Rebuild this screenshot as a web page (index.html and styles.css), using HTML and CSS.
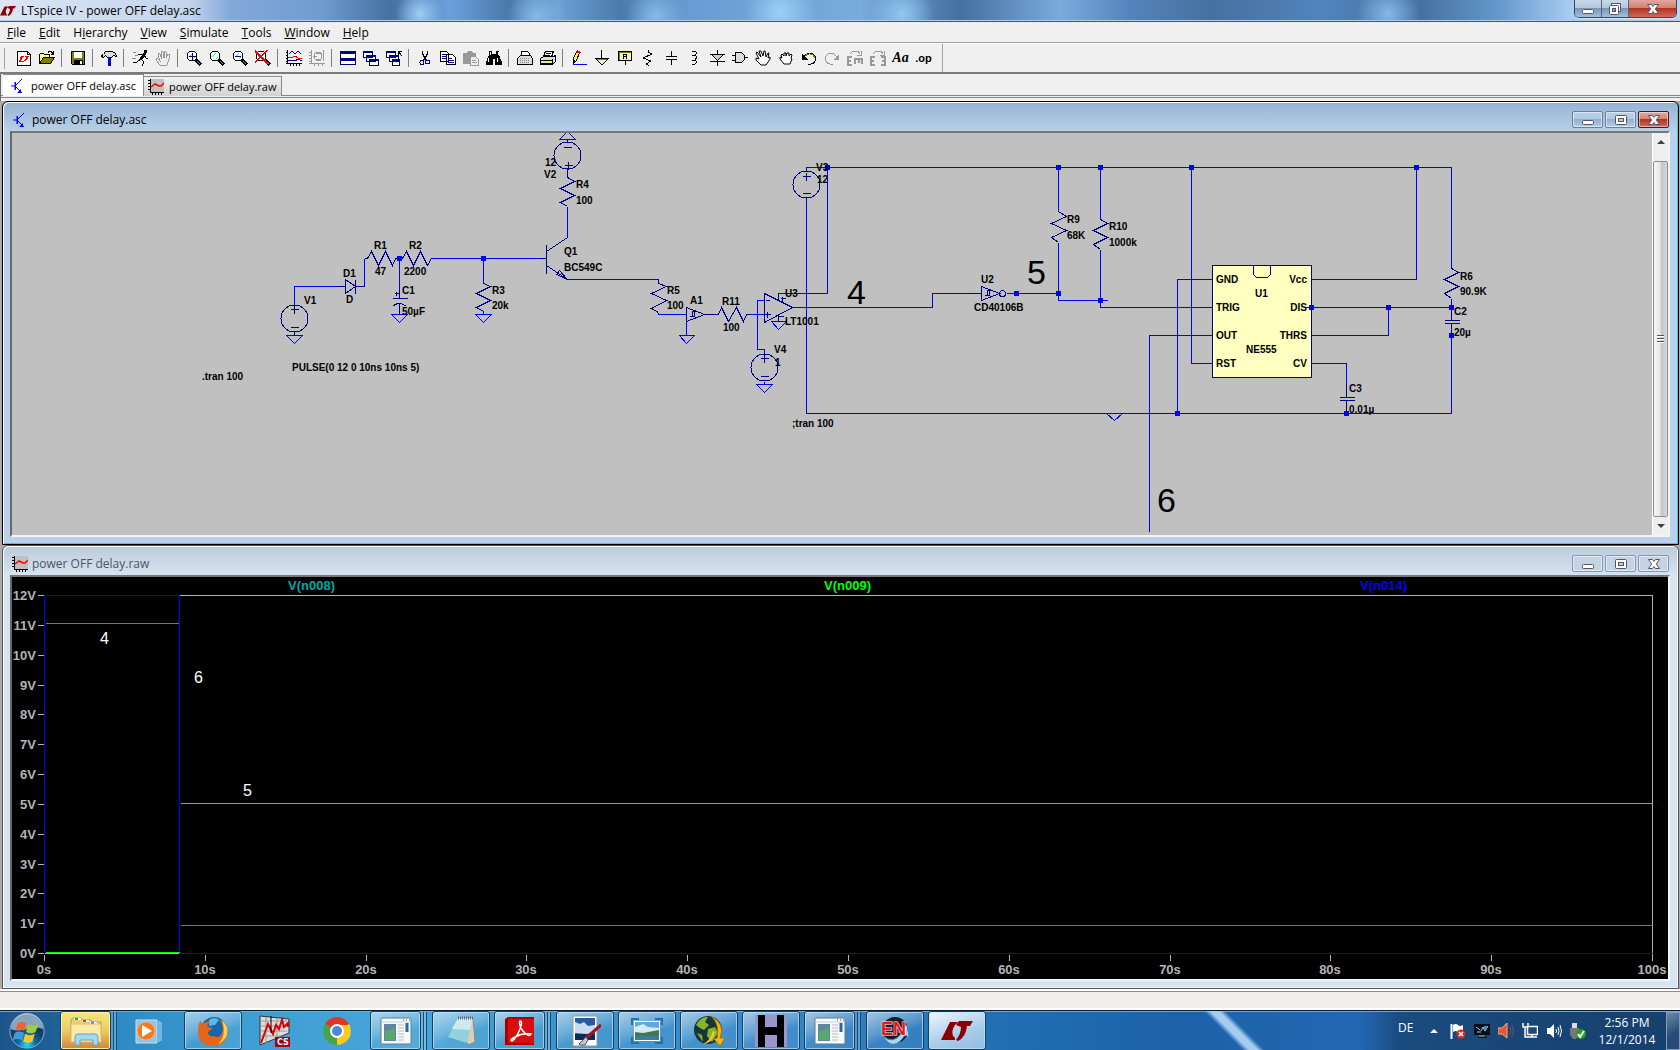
FILE: index.html
```html
<!DOCTYPE html>
<html lang="en">
<head>
    <meta charset="UTF-8">
    <meta name="viewport" content="width=device-width, initial-scale=1.0">
    <title>LTspice IV - power OFF delay.asc</title>
    <link rel="stylesheet" href="styles.css">
</head>
<body>
    <!-- shared shapes -->
    <svg class="defs" width="0" height="0" aria-hidden="true">
        <symbol id="logo" viewBox="0 0 32 20"><path fill="#8b0000" d="M9 1h8l-3 3q-4 6-2 11l2 2v2H0zM18 0h14l-3 5h-3q-1 11-9 15l-2-1q5-6 5-13l-5-2z"/></symbol>
        <symbol id="transistor" viewBox="0 0 16 16"><path d="M1 8h5M5 4v8M6 7l5-5M12 1l-1 1M6 9l6 6" stroke="#00f" fill="none"/><path d="M5 4h1v8H5zM11 11v4H7z" fill="#00f"/></symbol>
        <symbol id="wave" viewBox="0 0 16 16"><path fill="#c0c0c0" d="M2 0h14v14H2z"/><path d="M2.500 0v13.500H16M0 1.500h2M0 4.500h2M0 7.500h2M0 10.500h2M4.500 14v2M7.500 14v2M10.500 14v2M13.500 14v2" stroke="#000" fill="none"/><path d="M3 8l4-3 4 2h2l3-3" stroke="red" stroke-width="1.500" fill="none"/></symbol>
        <symbol id="lens" viewBox="0 0 16 16"><circle cx="6" cy="6" r="5" fill="#fff" stroke="#000"/><path d="M3 7l4-4M7 9l2-2" stroke="#0ff"/><path d="M10 10l5 5" stroke="#000" stroke-width="3"/><path d="M11 11l3 3" stroke="#888"/></symbol>
        <symbol id="min" viewBox="0 0 14 12"><rect x="1.500" y="6.500" width="11" height="4" rx="1" fill="#fff" stroke="#535666"/></symbol>
        <symbol id="max" viewBox="0 0 14 12"><rect x="1.500" y="1.500" width="11" height="9" rx="1" fill="#fff" stroke="#535666"/><rect x="4.500" y="4.500" width="5" height="3" fill="#bcd" stroke="#535666"/></symbol>
        <symbol id="restore" viewBox="0 0 14 12"><rect x="3.500" y=".5" width="9" height="8" fill="#fff" stroke="#535666"/><rect x="1.500" y="2.500" width="9" height="9" rx="1" fill="#fff" stroke="#535666"/><rect x="4.500" y="5.500" width="3" height="3" fill="#89b" stroke="#535666"/></symbol>
        <symbol id="close" viewBox="0 0 14 12"><path d="M1.500 1.500h4L7 3.500l1.500-2h4L9.300 6l3.200 4.500h-4L7 8.500l-1.500 2h-4L4.700 6z" fill="#fff" stroke="#535666"/></symbol>
        <symbol id="program" viewBox="0 0 32 28"><rect x="1" y="1" width="30" height="26" rx="1" fill="#f7f8fa" stroke="#657c90"/><path d="M2 5h28" stroke="#c9d2da"/><path d="M23 3h1M26 3h1M29 3h1" stroke="#345"/><rect x="4" y="7" width="12" height="17" fill="#5e86a0"/><path d="M5 15c4-3 7-2 10-5v13H5z" fill="#58a86c"/><path d="M18 8h6M18 11h6M18 14h6M18 17h6M18 20h6M18 23h6" stroke="#b7bcc2"/><path d="M27 6v9" stroke="#256aa0" stroke-width="3"/></symbol>
    </svg>

    <header class="titlebar">
        <svg class="app-logo"><use href="#logo"/></svg>
        <h1>LTspice IV - power OFF delay.asc</h1>
        <div class="caption main-caption">
            <button aria-label="Minimize"><svg><use href="#min"/></svg></button>
            <button aria-label="Restore"><svg><use href="#restore"/></svg></button>
            <button class="close" aria-label="Close"><svg><use href="#close"/></svg></button>
        </div>
    </header>

    <nav class="menu">
        <button><u>F</u>ile</button>
        <button><u>E</u>dit</button>
        <button>H<u>i</u>erarchy</button>
        <button><u>V</u>iew</button>
        <button><u>S</u>imulate</button>
        <button><u>T</u>ools</button>
        <button><u>W</u>indow</button>
        <button><u>H</u>elp</button>
    </nav>

    <div class="toolbar">
        <div class="tools">
            <button aria-label="New schematic"><svg viewBox="0 0 16 16"><path d="M1.500 1.500h10l3 3v11h-13z" fill="#fff" stroke="#000"/><path d="M11.500 1.500v3h3" fill="none" stroke="#000"/><path fill="red" d="M5 6h3l-3 5h2l-1 1H3zM9 6h4l-2 4-4 2 3-4z"/></svg></button>
            <button aria-label="Open"><svg viewBox="0 0 16 16"><path d="M.5 13.500v-9l1-1h3l1 1h5v3" fill="#ffff80" stroke="#000"/><path d="M.5 13.500l4-6h11l-4 6z" fill="#808000" stroke="#000"/><path d="M9 2.500l1-1h2l2 2M14.500 1v3h-3" fill="none" stroke="#000"/></svg></button>
            <span class="sep"></span>
            <button aria-label="Save"><svg viewBox="0 0 16 16"><path d="M1.500 1.500h13v13h-12l-1-1z" fill="#808000" stroke="#000"/><path fill="#fff" d="M4 2h8v6H4z"/><path fill="#000" d="M4 10h9v5H4z"/><path fill="#fff" d="M10 11h2v3h-2z"/></svg></button>
            <span class="sep"></span>
            <button aria-label="Control panel"><svg viewBox="0 0 16 16"><path d="M.5 5.500l2-1 2-3h7l3 2 1 3-3-1-2 2h-4l-2-2-2 2h-1z" fill="#ddd" stroke="#000"/><path d="M7 7h3v9H7z" fill="#00f"/><path d="M9.500 7v9" stroke="#000080"/></svg></button>
            <span class="sep"></span>
            <button aria-label="Run"><svg viewBox="0 0 16 16"><path d="M12 0h3v3h-3z"/><path d="M13 3L9 9" fill="none" stroke="#000" stroke-width="3"/><path d="M9 9l3 3-2 4M9 9l-4 3H1M11 4L7 4 5 6M12 5l2 3h2" fill="none" stroke="#000"/><path d="M1 2h3M3 5h3M0 8h4" stroke="#888"/></svg></button>
            <button aria-label="Halt" disabled><svg viewBox="0 0 16 16"><path d="M5 15L1 10V8l2 1 2 2-2-7 1-1 1 1 2 5-1-7 1-1 1 1 1 6V2l1-1 1 1v6l2-4h1v5l-2 6z" fill="#eee" stroke="#999"/></svg></button>
            <span class="sep"></span>
            <button aria-label="Zoom in"><svg viewBox="0 0 16 16"><use href="#lens"/><path d="M3 6.500h7M6.500 3v7" stroke="#000080"/></svg></button>
            <button aria-label="Pan"><svg><use href="#lens"/></svg></button>
            <button aria-label="Zoom back"><svg viewBox="0 0 16 16"><use href="#lens"/><path d="M3 6.500h6" stroke="#000080"/></svg></button>
            <button aria-label="Zoom full extents"><svg viewBox="0 0 16 16"><use href="#lens"/><path d="M0 1l13 13M12 0L0 13" stroke="red" stroke-width="1.500"/></svg></button>
            <span class="sep"></span>
            <button aria-label="Autorange"><svg viewBox="0 0 16 16"><path d="M1.500 0v14M0 13.500h16M0 2h2M0 5h2M0 8h2M0 11h2M4 14v2M7 14v2M10 14v2M13 14v2" stroke="#000"/><path d="M3 4l3-3 3 3 3-3 3 3M2 11l3-1 4 1 3-2 4 2" stroke="#000080" fill="none"/><path d="M2 7h5l2-1 3 2h4" stroke="red" fill="none"/></svg></button>
            <button aria-label="Plot settings" disabled><svg viewBox="0 0 16 16"><path d="M2.500 0v14M0 13.500h16M0 2h2M0 5h2M0 8h2M0 11h2M5 14v2M9 14v2M13 14v2M14.500 0v11M4 6h4M7 3h5M7 10h5" stroke="#999"/><circle cx="9" cy="6" r="4" fill="none" stroke="#999"/></svg></button>
            <span class="sep"></span>
            <button aria-label="Tile"><svg viewBox="0 0 16 16"><path d="M.5 1.500h15v13H.5zM0 8.500h16" fill="#fff" stroke="#000080"/><path d="M0 2.500h16M0 9.500h16" stroke="#000080" stroke-width="3"/></svg></button>
            <button aria-label="Cascade"><svg viewBox="0 0 16 16"><g fill="#fff" stroke="#000080"><path d="M.5 1.500h9v6h-9zM0 2.500h10M3.500 5.500h9v6h-9zM3 6.500h10M6.500 9.500h9v6h-9zM6 10.500h10"/></g></svg></button>
            <button aria-label="Close all"><svg viewBox="0 0 16 16"><g fill="#fff" stroke="#000080"><path d="M.5 1.500h9v6h-9zM0 2.500h10M3.500 5.500h9v6h-9zM3 6.500h10M6.500 9.500h7v6h-7zM6 10.500h8"/></g><path d="M12 1h4M12.500 1v4M12 1l4 5" stroke="#000"/></svg></button>
            <span class="sep"></span>
            <button aria-label="Cut"><svg viewBox="0 0 16 16"><path d="M5.500 1v3l4 6M10.500 1v3l-4 6" fill="none" stroke="#000" stroke-width="1.500"/><circle cx="5" cy="12.500" r="2" fill="none" stroke="#000080"/><circle cx="10.500" cy="12" r="2" fill="none" stroke="#000080"/></svg></button>
            <button aria-label="Copy"><svg viewBox="0 0 16 16"><path d="M.5 1.500h6l2 2v8h-8zM6.500 4.500h6l3 3v7h-9z" fill="#fff" stroke="#000"/><path d="M2 4h4M2 6h4M2 8h4M8 8h4M8 10h6M8 12h6" stroke="#000080"/></svg></button>
            <button aria-label="Paste" disabled><svg viewBox="0 0 16 16"><path d="M0 3h4l1-2h4l1 2h3v11H0z" fill="#999"/><path d="M7.500 6.500h5l3 3v6h-8z" fill="#eee" stroke="#999"/><path d="M9 10h4M9 12h5" stroke="#999"/></svg></button>
            <button aria-label="Find"><svg viewBox="0 0 16 16"><path d="M3 1h3v3h4V1h3v4l3 7v3H9V9H7v6H0v-3l3-7z"/><path d="M4 2v3M12 2v3M3 8l-1 4M11 8v4" stroke="#fff"/></svg></button>
            <span class="sep"></span>
            <button aria-label="Print setup"><svg viewBox="0 0 16 16"><path d="M4.500 6V1.500h6l2 2V6" fill="#fff" stroke="#000"/><path d="M.5 8.500l3-3h10l2 3v6H.5z" fill="#ddd" stroke="#000"/><path d="M3 8h10M3 10h10M3 12h10" stroke="#888" stroke-dasharray="1 1"/></svg></button>
            <button aria-label="Print"><svg viewBox="0 0 16 16"><path d="M3.500 7l2-6h8l-2 6" fill="#fff" stroke="#000"/><path d="M.5 8.500l3-2h10l2-1v6l-3 3H.5z" fill="#ddd" stroke="#000"/><path d="M6 3h5M5 5h5M1 10h11M1 13h11M12.500 9v5" stroke="#000"/><path d="M7 12h4" stroke="#ff0" stroke-width="2"/></svg></button>
            <span class="sep"></span>
            <button aria-label="Draw wire"><svg viewBox="0 0 16 16"><path d="M6 1l3 1-4 9-3 3V9z" fill="#ff0" stroke="#000"/><path d="M6 0l4 2-1 2-4-2z" fill="red"/><path d="M2 10l3 1-3 4z"/><path d="M2 14.500h14" stroke="#00f"/></svg></button>
            <button aria-label="Ground"><svg viewBox="0 0 16 16"><path d="M7.500 0v8M1.500 8.500h13l-6 6h-1z" fill="#f0f0c0" stroke="#000"/><path d="M3 9.500h10" stroke="#808000"/></svg></button>
            <button aria-label="Label net"><svg viewBox="0 0 16 16"><path d="M1.500 1.500h13v9h-13z" fill="#f0f0c0" stroke="#000"/><path d="M3 2.500h11M2.500 2v8" stroke="#808000"/><path d="M6.500 9V4.500h3V9M7 6.500h3M8 11v4" fill="none" stroke="#000"/></svg></button>
            <button aria-label="Resistor"><svg viewBox="0 0 16 16"><path d="M8 0v2l4 2-9 4 8 3-5 3 2 1v1" fill="none" stroke="#000"/></svg></button>
            <button aria-label="Capacitor"><svg viewBox="0 0 16 16"><path d="M8.500 1v6M3 6.500h11M3 9.500h11M8.500 10v5" stroke="#000"/></svg></button>
            <button aria-label="Inductor"><svg viewBox="0 0 16 16"><path d="M6 1h3l2 2-2 2H6M9 5l2 2-2 3H6M9 10l2 2-2 2H6" fill="none" stroke="#000"/></svg></button>
            <button aria-label="Diode"><svg viewBox="0 0 16 16"><path d="M8.500 0v4M1 4.500h15M2.500 4.500l6 6 6-6M1 11.500h15M8.500 11v5" fill="#ccc" stroke="#000"/></svg></button>
            <button aria-label="Component"><svg viewBox="0 0 16 16"><path d="M3.500 2.500h6l3 3v4l-3 3h-6zM0 5.500h3M0 10.500h3M12 7.500h4" fill="#ddd" stroke="#000"/></svg></button>
            <button aria-label="Move"><svg class="hand" viewBox="0 0 16 16"><path d="M6 15L1 10V8l3 1-3-6 1-1 4 5-2-6h2l2 5 1-5h1l1 6 2-4h1l-1 5 2-1v2l-4 6z" fill="#fff" stroke="#000"/></svg></button>
            <button aria-label="Drag"><svg class="hand" viewBox="0 0 16 16"><path d="M6 14L2 9V7l2 1-1-3 1-1 2 2V3h2v3l1-3h2v3l2-2 1 1-1 3 1 1-2 5z" fill="#fff" stroke="#000"/></svg></button>
            <button aria-label="Undo"><svg viewBox="0 0 16 16"><path d="M3 7c3-5 10-5 12 1 0 4-3 6-5 6H7" fill="none" stroke="#000"/><path d="M4 6c3-3 8-3 10 2" fill="none" stroke="#808000"/><path d="M1.500 4.500v5h5z" stroke="#000"/></svg></button>
            <button aria-label="Redo" disabled><svg viewBox="0 0 16 16"><path d="M13 7C10 2 3 2 1 8c0 4 3 6 5 6h3" fill="none" stroke="#999"/><path d="M14.500 4.500v5h-5z" fill="#999"/></svg></button>
            <button aria-label="Rotate" disabled><svg viewBox="0 0 16 16"><path d="M1 6v9M0 7h5M0 11h4M0 15h5M7 9h9M8 9v5M12 9v4M15 9v5" stroke="#999" stroke-width="2"/><path d="M3 4l3-3h5l2 3M14 1v4h-4" fill="none" stroke="#999"/></svg></button>
            <button aria-label="Mirror" disabled><svg viewBox="0 0 16 16"><path d="M1 6v9M0 7h5M0 11h4M0 15h5M15 6v9M11 7h5M12 11h4M11 15h5" stroke="#999" stroke-width="2"/><path d="M3 4l3-3h5l2 3M14 1v4h-4" fill="none" stroke="#999"/></svg></button>
            <button class="tool-text">Aa</button>
            <button class="tool-op">.op</button>
        </div>
    </div>

    <div class="tabs">
        <button class="tab active"><svg><use href="#transistor"/></svg>power OFF delay.asc</button>
        <button class="tab"><svg><use href="#wave"/></svg>power OFF delay.raw</button>
    </div>

    <main class="mdi">
        <section class="window">
            <div class="window-title">
                <svg><use href="#transistor"/></svg>
                <h2>power OFF delay.asc</h2>
                <div class="caption">
                    <button aria-label="Minimize"><svg><use href="#min"/></svg></button>
                    <button aria-label="Maximize"><svg><use href="#max"/></svg></button>
                    <button class="close" aria-label="Close"><svg><use href="#close"/></svg></button>
                </div>
            </div>
            <div class="client">
                <svg class="schematic" viewBox="12 133 1640 402" preserveAspectRatio="xMinYMin meet">
                    <g transform="translate(.5 .5)">
                        <path class="wire" d="M294 305v-19h43M364 286v-28M399 258v32M431 258h109M483 258v25M567 206v31M567 279h91v4M658 312v2h28M686 321v14M750 314h14M764 300h-7v49h7v4M778 299v-6h49v-126M806 170v-3h645v101M806 197v216h645v-78M792 307h140v-14h36M1006 293h52v7h49M1058 167v44M1058 242v51M1100 167v52M1100 249v58h112M1191 167v196h21M1212 279h-35v134M1212 335h-63v196M1311 279h105v-112M1305 307h146M1388 307v28h-77M1311 363h35v34M1451 298v9"/>
                        <!-- grounds -->
                        <path class="wire" d="M559 139l8-8 8 8zM286 335h16l-8 8zM391 314h16l-8 8zM475 314h16l-8 8zM679 335h15l-8 8zM771 321h15l-8 8zM756 384h16l-8 8zM1106 413l8 7 8-7"/>
                        <g class="part">
                            <!-- voltage sources -->
                            <circle cx="567" cy="155" r="13.500"/><path d="M563 147h8M564 165h8M568 161v8M567 139v3M567 169v8"/>
                            <circle cx="294" cy="318" r="13.500"/><path d="M290 309h8M294 305v8M290 327h8M294 332v3"/>
                            <circle cx="806" cy="184" r="13.500"/><path d="M802 176h8M806 172v8M802 193h8"/>
                            <circle cx="764" cy="367" r="13.500"/><path d="M760 358h8M764 354v8M760 376h8M764 381v3"/>
                            <!-- resistors -->
                            <path d="M364 258h3l4-7 7 14 7-14 7 14 3-7h7l4-7 7 14 7-14 7 14 4-7"/>
                            <path d="M567 177l7 4-14 7 14 7-14 7 7 4M483 283l7 3-14 7 14 7-14 7 7 4v3M658 283l8 3-15 7 15 7-15 8 7 4M704 314h14l3-7 7 14 8-14 7 14 3-7h4"/>
                            <path d="M1058 211l8 5-15 7 15 7-15 7 7 5M1100 219l7 4-14 7 14 7-14 7 7 5M1451 268l7 4-14 7 14 7-14 7 7 5"/>
                            <!-- diode, capacitors, transistor -->
                            <path d="M337 286h8M345 279v14l10-7zM355 279v14M355 286h9M399 290v8M392 298h15M392 306q3-3 7-3t7 3M399 303v11M394 293h4M396 291v4"/>
                            <path d="M1451 307v13M1444 320h15M1444 323h15M1451 323v12M1346 385v12M1339 397h15M1339 400h15M1346 400v13"/>
                            <path d="M540 258h6M546 244v29M546 251l21-14M546 265l21 14M559 270l8 9-11-5z"/>
                            <!-- gates -->
                            <path d="M686 307v14l18-7zM689 316h3v-5h2M691 316h3v-5M764 293v29l28-15zM765 300h4M764 314h6M767 311v6M778 293v6M780 298h5M782 296v5M778 314v7M778 316h5M968 293h13M981 286v14l18-7zM984 295h3v-5h2M986 295h3v-5"/>
                            <circle cx="1002" cy="293" r="3"/>
                        </g>
                        <rect class="chip" x="1212" y="265" width="99" height="112"/>
                        <path class="part" d="M1253 265v9l3 3h11l3-3v-9"/>
                        <path class="wire" d="M1305 307h7"/>
                        <path class="node" d="M397 256h5v5h-5zM481 256h5v5h-5zM825 165h5v5h-5zM1056 165h5v5h-5zM1098 165h5v5h-5zM1189 165h5v5h-5zM1414 165h5v5h-5zM1014 291h5v5h-5zM1056 291h5v5h-5zM1098 298h5v5h-5zM1309 305h5v5h-5zM1386 305h5v5h-5zM1449 305h5v5h-5zM1449 333h5v5h-5zM1175 411h5v5h-5zM1344 411h5v5h-5z"/>
                    </g>
                    <g class="labels">
                        <text x="545" y="166">12</text><text x="544" y="178">V2</text>
                        <text x="576" y="188">R4</text><text x="576" y="204">100</text>
                        <text x="374" y="249">R1</text><text x="375" y="275">47</text>
                        <text x="409" y="249">R2</text><text x="404" y="275">2200</text>
                        <text x="343" y="277">D1</text><text x="346" y="303">D</text>
                        <text x="304" y="304">V1</text>
                        <text x="402" y="294">C1</text><text x="402" y="315">50µF</text>
                        <text x="492" y="294">R3</text><text x="492" y="309">20k</text>
                        <text x="564" y="255">Q1</text><text x="564" y="271">BC549C</text>
                        <text x="292" y="371">PULSE(0 12 0 10ns 10ns 5)</text>
                        <text x="202" y="380">.tran 100</text>
                        <text x="667" y="294">R5</text><text x="667" y="309">100</text>
                        <text x="690" y="304">A1</text>
                        <text x="722" y="305">R11</text><text x="723" y="331">100</text>
                        <text x="785" y="297">U3</text><text x="785" y="325">LT1001</text>
                        <text x="774" y="353">V4</text><text x="775" y="366">1</text>
                        <text x="816" y="171">V3</text><text x="817" y="183">12</text>
                        <text x="792" y="427">;tran 100</text>
                        <text x="981" y="283">U2</text><text x="974" y="311">CD40106B</text>
                        <text x="1067" y="223">R9</text><text x="1067" y="239">68K</text>
                        <text x="1109" y="230">R10</text><text x="1109" y="246">1000k</text>
                        <text x="1460" y="280">R6</text><text x="1460" y="295">90.9K</text>
                        <text x="1454" y="315">C2</text><text x="1454" y="336">20µ</text>
                        <text x="1349" y="392">C3</text><text x="1349" y="413">0.01µ</text>
                        <text x="1216" y="283">GND</text><text x="1216" y="311">TRIG</text>
                        <text x="1216" y="339">OUT</text><text x="1216" y="367">RST</text>
                        <text class="end" x="1307" y="283">Vcc</text><text class="end" x="1307" y="311">DIS</text>
                        <text class="end" x="1307" y="339">THRS</text><text class="end" x="1307" y="367">CV</text>
                        <text x="1255" y="297">U1</text><text x="1246" y="353">NE555</text>
                    </g>
                    <g class="marks">
                        <text x="847" y="304">4</text><text x="1027" y="284">5</text><text x="1157" y="512">6</text>
                    </g>
                </svg>
                <div class="scrollbar">
                    <button aria-label="Scroll up"><svg viewBox="0 0 8 4"><path d="M0 4l4-4 4 4z"/></svg></button>
                    <div class="thumb"><i></i><i></i><i></i></div>
                    <button aria-label="Scroll down"><svg viewBox="0 0 8 4"><path d="M0 0l4 4 4-4z"/></svg></button>
                </div>
            </div>
        </section>

        <section class="window inactive">
            <div class="window-title">
                <svg><use href="#wave"/></svg>
                <h2>power OFF delay.raw</h2>
                <div class="caption">
                    <button aria-label="Minimize"><svg><use href="#min"/></svg></button>
                    <button aria-label="Maximize"><svg><use href="#max"/></svg></button>
                    <button aria-label="Close"><svg><use href="#close"/></svg></button>
                </div>
            </div>
            <div class="client">
                <svg class="plot" viewBox="12 577 1656 402" preserveAspectRatio="xMinYMin meet">
                    <g transform="translate(.5 .5)">
                        <path class="axis" d="M44 595h1608v365M44 953h1608M37 595h7M37 625h7M37 655h7M37 685h7M37 714h7M37 744h7M37 774h7M37 804h7M37 834h7M37 864h7M37 893h7M37 923h7M37 953h7M44 954v6M205 954v6M366 954v6M526 954v6M687 954v6M848 954v6M1009 954v6M1170 954v6M1330 954v6M1491 954v6"/>
                        <path class="n008" d="M45 623h134M180 925h1472"/>
                        <path class="n014" d="M44 953v-358h135v358h1473"/>
                        <path class="n009" d="M45 952h134M180 803h1472"/>
                    </g>
                    <g class="legend">
                        <text class="t008" x="288" y="590">V(n008)</text>
                        <text class="t009" x="824" y="590">V(n009)</text>
                        <text class="t014" x="1360" y="590">V(n014)</text>
                    </g>
                    <g class="ylabels">
                        <text x="36" y="600">12V</text><text x="36" y="630">11V</text><text x="36" y="660">10V</text>
                        <text x="36" y="690">9V</text><text x="36" y="719">8V</text><text x="36" y="749">7V</text>
                        <text x="36" y="779">6V</text><text x="36" y="809">5V</text><text x="36" y="839">4V</text>
                        <text x="36" y="869">3V</text><text x="36" y="898">2V</text><text x="36" y="928">1V</text>
                        <text x="36" y="958">0V</text>
                    </g>
                    <g class="xlabels">
                        <text x="44" y="974">0s</text><text x="205" y="974">10s</text><text x="366" y="974">20s</text>
                        <text x="526" y="974">30s</text><text x="687" y="974">40s</text><text x="848" y="974">50s</text>
                        <text x="1009" y="974">60s</text><text x="1170" y="974">70s</text><text x="1330" y="974">80s</text>
                        <text x="1491" y="974">90s</text><text x="1652" y="974">100s</text>
                    </g>
                    <g class="notes">
                        <text x="100" y="644">4</text><text x="194" y="683">6</text><text x="243" y="796">5</text>
                    </g>
                </svg>
            </div>
        </section>
    </main>

    <div class="status"></div>

    <footer class="taskbar">
        <button class="start" aria-label="Start"><svg viewBox="0 0 40 40"><defs><radialGradient id="orb" cy="90%"><stop offset="0" stop-color="#21e0ff"/><stop offset=".5" stop-color="#0d6ca8"/><stop offset="1" stop-color="#153d66"/></radialGradient></defs><circle cx="20" cy="20" r="18" fill="url(#orb)" stroke="#8eb6d2"/><path d="M3 18a17 17 0 0134 0c-10-5-24 5-34 0z" fill="#c8dcea" opacity=".65"/><path d="M10 12q5-3 9 0l-2 8q-5-3-9 0z" fill="#f0642b"/><path d="M21 13q5 3 11 0l-3 8q-5 3-10 0z" fill="#9bd03c"/><path d="M7 22q5-3 10 0l-2 8q-5-3-10 0z" fill="#3d9be0"/><path d="M18 23q5 3 10 0l-2 8q-5 3-10 0z" fill="#fcc42c"/></svg></button>
        <div class="tasks">
            <div class="slot stack"><button class="task explorer" aria-label="Explorer"><svg viewBox="0 0 32 32"><path d="M1 5l2-2h8l2 2h8l2 2h8v20H1z" fill="#e9cf74" stroke="#c29a3a"/><path d="M4 4h7M12 6h7M20 8h7" stroke="#fff" stroke-width="2"/><path d="M5 4h3" stroke="#2a3" stroke-width="2"/><path d="M13 6h3" stroke="#d33" stroke-width="2"/><path d="M21 8h3" stroke="#38d" stroke-width="2"/><path d="M1 9h30v18H1z" fill="#faeaa8" stroke="#dfbf62"/><path d="M5 30v-8q0-3 3-3h17q3 0 3 3v8h-5v-5H10v5z" fill="#a5d8ee" stroke="#5aa5ca"/></svg></button></div>
            <div class="slot stack"><button class="task plain" aria-label="Media player"><svg viewBox="0 0 32 32"><path d="M4 5h21v23H4z" fill="#8fc4e8" stroke="#c2e0f4"/><path d="M27 6v21M29 7v19" stroke="#b5d8ef"/><circle cx="14" cy="16" r="9" fill="#f47b20" stroke="#f9b27a"/><path d="M10 10l10 6-10 6z" fill="#fff"/></svg></button></div>
            <div class="slot"><button class="task" aria-label="Firefox"><svg viewBox="0 0 32 32"><circle cx="17" cy="15" r="13" fill="#1767a8"/><path d="M12 5q5-4 10 0l-4 5-6 1z" fill="#59b8e4"/><path d="M3 6l3 3q3-3 7-2-4 3-2 5l5 1-5 4q0 5 6 4 5 3 8-3 3-6-3-14 9 5 9 13-2 14-15 14Q1 30 1 17 1 10 3 6z" fill="#e4651b"/><path d="M25 5q7 6 5 15-3 7-9 9 9-8 4-24z" fill="#ffd34a"/></svg></button></div>
            <div class="slot"><button class="task plain" aria-label="CS"><svg viewBox="0 0 32 32"><path d="M1 1l29 3v14L1 30z" fill="#ddd" stroke="#333"/><path d="M2 6h26M2 11h26M2 16h26M2 21h20M7 2v26M18 3v20" stroke="#999"/><path d="M2 28L9 9l5 10 3-9 3 4 3-9 2 7 4-4v4" fill="none" stroke="#e00000" stroke-width="2"/><path d="M12 1v17" stroke="#000"/><path d="M16 22h15v10H16z" fill="#a00010"/><text class="badge" x="18" y="30">CS</text></svg></button></div>
            <div class="slot"><button class="task plain" aria-label="Chrome"><svg viewBox="0 0 32 32"><path d="M16 16L3.900 9A14 14 0 0128.100 9z" fill="#df3527"/><path d="M16 16L28.100 9A14 14 0 0116 30z" fill="#fcc91f"/><path d="M16 16v14A14 14 0 013.900 9z" fill="#44a548"/><path d="M16 10h13l-6 10z" fill="#fcc91f"/><circle cx="16" cy="16" r="7" fill="#fff"/><circle cx="16" cy="16" r="5" fill="#4a88d8"/></svg></button></div>
            <div class="slot stack"><button class="task" aria-label="Program"><svg><use href="#program"/></svg></button></div>
            <div class="slot"><button class="task" aria-label="Notepad"><svg viewBox="0 0 32 32"><path d="M13 3h15l2 24-7 3z" fill="#d9d0b8" stroke="#8e8a7a"/><path d="M13 3h15l-6 25-19-6z" fill="#91d2dc"/><path d="M13 3h15l-3 12-18-1z" fill="#cfe9ec"/><path d="M13 3h15" stroke="#667" stroke-width="3" stroke-dasharray="1 1"/></svg></button></div>
            <div class="slot stack"><button class="task" aria-label="Acrobat"><svg viewBox="0 0 32 32"><path d="M1 4l3-2h26v28H1z" fill="#a00"/><path d="M4 4h26v24H4z" fill="#d90d0d"/><path d="M16 6q3 0 0 8-4 10-8 12-3-1 3-4 7-4 16-3-2 4-8-3-5-7-3-10z" fill="none" stroke="#fff" stroke-width="1.500"/></svg></button></div>
            <div class="slot"><button class="task" aria-label="Paint"><svg viewBox="0 0 32 32"><path d="M4 1h24v30H4z" fill="#fff" stroke="#999"/><path d="M6 3h20v22H6z" fill="#2c5a9e"/><path d="M6 7l5 2 4-2 4 4 7-1v7l-8 2-12-1z" fill="#c8dcee"/><path d="M6 19h20v6H6z" fill="#102a55"/><path d="M32 10L16 24" stroke="#9a1722" stroke-width="3"/><path d="M17 22l-7 7 1 1h5l3-5z" fill="#bcc6d0" stroke="#556"/></svg></button></div>
            <div class="slot"><button class="task" aria-label="Pictures"><svg viewBox="0 0 32 32"><path d="M3 6h26v20H3z" fill="#fff"/><path d="M4 7h24v18H4z" fill="#5ea8dd"/><path d="M4 12l8-3 5 3 11 1v6H4z" fill="#d4eaf4"/><path d="M4 17l8 1 16-3v6H4z" fill="#3e7a50"/><path d="M4 21h24v4H4z" fill="#3e7c9a"/><path d="M1 10V4h7M24 4h7v6M31 22v6h-7M8 28H1v-6" fill="none" stroke="#1d71b5" stroke-width="2"/></svg></button></div>
            <div class="slot"><button class="task" aria-label="Download manager"><svg viewBox="0 0 32 32"><circle cx="15" cy="15" r="14" fill="#17333b"/><path d="M3 10q5-9 12-8l-3 5 4 3-5 5-4-2zM15 14l7-2 3 6-6 9-5-6zM4 18l5 2 1 7z" fill="#86b52a"/><path d="M18 1q15 8 9 22h5l-5 8-6-7 3-1Q27 9 18 1z" fill="#f5b616" stroke="#a47707"/><path d="M22 17q-2 11-12 12 8-4 10-13z" fill="#f5c733"/></svg></button></div>
            <div class="slot"><button class="task" aria-label="H"><svg viewBox="0 0 32 32"><path d="M0 0h32v32H0z" fill="#9a96cb"/><path d="M3 0h7v12h12V0h7v32h-7V20H10v12H3z"/></svg></button></div>
            <div class="slot stack"><button class="task" aria-label="Program"><svg><use href="#program"/></svg></button></div>
            <div class="slot"><button class="task" aria-label="EN"><svg viewBox="0 0 32 32"><circle cx="16" cy="15" r="13" fill="#171c22"/><path d="M4 21q10 9 19-3l-4-1 9-7 2 12-4-2Q14 38 4 21z" fill="#a3d8ef" stroke="#3c90bd"/><text class="en" x="2" y="20">EN</text></svg></button></div>
            <div class="slot"><button class="task current" aria-label="LTspice"><svg viewBox="0 0 32 32"><use href="#logo" y="6" width="32" height="20"/></svg></button></div>
        </div>
        <div class="tray">
            <span class="lang">DE</span>
            <button aria-label="Show hidden icons"><svg viewBox="0 0 16 16"><path d="M4 10l4-4 4 4z" fill="#fff"/></svg></button>
            <button aria-label="Action center"><svg viewBox="0 0 16 16"><path d="M1.500 1v15" stroke="#fff" stroke-width="2"/><path d="M3 2q3-2 5 0t5 0v7q-3 2-5 0T3 9z" fill="#fff"/><circle cx="11" cy="11" r="4.500" fill="#d92a1c"/><path d="M9 9l4 4M13 9l-4 4" stroke="#fff" stroke-width="1.500"/></svg></button>
            <button aria-label="Display"><svg viewBox="0 0 16 16"><path d="M0 1h16v11H0zM6 12h5l2 3H4z" fill="#0b0f14"/><path d="M2 4l4 3M7 8l2-4 2 4 3-5M3 9h4" stroke="#8fd0f4" fill="none"/><path d="M10 3h3v3h-3z" fill="#3f8fd0"/><path d="M5 13h6" stroke="#ccc"/></svg></button>
            <button aria-label="Audio manager"><svg viewBox="0 0 16 16"><path d="M0 5h4l5-5v15l-5-4H0z" fill="#e2592f" stroke="#f4a58a"/><path d="M12 4q2 4 0 8M14 2q3 6 0 12" fill="none" stroke="#7b4a52"/></svg></button>
            <button aria-label="Network"><svg viewBox="0 0 16 16"><path d="M5.500 3.500h10v8h-10zM8 14h7M3 5v9h5M1 0v4h5V0M10 12v2" fill="#1f4775" stroke="#fff" stroke-width="1.500"/></svg></button>
            <button aria-label="Volume"><svg viewBox="0 0 16 16"><path d="M1 5h3l4-4v14l-4-4H1z" fill="#fff"/><path d="M10 6q1 2 0 4M12 4q2 4 0 8M14 2q3 6 0 12" fill="none" stroke="#fff"/></svg></button>
            <button aria-label="Remove hardware"><svg viewBox="0 0 16 16"><path d="M2 0h5v5H2z" fill="#ddd"/><path d="M0 5h9v7l-3 4H3l-3-4z" fill="#777"/><circle cx="11" cy="11" r="5" fill="#23a01e"/><path d="M8 11l2 3 4-6" stroke="#fff" stroke-width="2" fill="none"/></svg></button>
            <div class="clock"><span>2:56 PM</span><span>12/1/2014</span></div>
            <button class="desktop" aria-label="Show desktop"></button>
        </div>
    </footer>
</body>
</html>
```

FILE: styles.css
```css
* {
    box-sizing: border-box;
}
body {
    margin: 0;
    height: 100vh;
    display: flex;
    flex-direction: column;
    overflow: hidden;
    background: #f0f0f0;
    color: #000;
    font-family: "Open Sans", "Noto Sans", sans-serif;
    font-size: 12px;
}
button {
    font: inherit;
    color: inherit;
    padding: 0;
    border: none;
    background: none;
}
h1, h2 {
    margin: 0;
    font-size: 12px;
    font-weight: normal;
}
svg {
    display: block;
}
.defs {
    position: absolute;
}

/* title bar */
.titlebar {
    flex: none;
    height: 22px;
    display: flex;
    align-items: flex-start;
    border-bottom: 1px solid #44546a;
    box-shadow: inset 0 -1px #b4cdea;
    background:
        radial-gradient(circle at 420px 14px, #9fcdf6 0, transparent 24px),
        radial-gradient(circle at 537px 16px, #86b9e6 0, transparent 30px),
        radial-gradient(circle at 656px 16px, #86b9e8 0, transparent 30px),
        radial-gradient(circle at 780px 12px, #9bcff6 0, transparent 36px),
        radial-gradient(circle at 902px 14px, #93c8f2 0, transparent 32px),
        radial-gradient(circle at 1388px 14px, #86b7ec 0, transparent 32px),
        linear-gradient(90deg, #dbe6f4 0, #c3d4ec 190px, #84a8da 230px, #6f9dd2 320px, #44719f 390px, #6aa0dc 450px, #4a77ab 510px, #6c9ed4 560px, #4b7aae 620px, #6a9bd2 690px, #7aabde 860px, #44709e 960px, #7aaade 1060px, #5484bb 1130px, #44719f 1210px, #5383bd 1320px, #44719f 1420px, #6698ce 1500px, #a8cbf0 1570px, #b9d5f2 100%);
}
.app-logo {
    width: 16px;
    height: 10px;
    margin: 6px 5px 0 0;
}
.titlebar h1 {
    line-height: 21px;
    flex: 1;
}
.caption {
    display: flex;
}
.caption svg {
    width: 14px;
    height: 12px;
}
.caption button {
    display: flex;
    align-items: center;
    justify-content: center;
}
.main-caption {
    margin-right: 3px;
    height: 18px;
    border: 1px solid #34465c;
    border-top: none;
    border-radius: 0 0 5px 5px;
    overflow: hidden;
    box-shadow: 0 1px #d5e6f6;
}
.main-caption button {
    width: 27px;
    height: 17px;
    border-right: 1px solid #50647c;
    background: linear-gradient(#c9d9ea 0, #b3c8de 45%, #7897b8 50%, #a5c0dc 100%);
}
.main-caption .close {
    width: 47px;
    border: none;
}
.caption .close {
    background: linear-gradient(#e3a79d 0, #d28273 45%, #b33521 50%, #d1685a 100%);
}

/* menu */
.menu {
    flex: none;
    height: 22px;
    display: flex;
    align-items: center;
    gap: 13px;
    padding: 0 7px;
    border-bottom: 1px solid #fff;
    box-shadow: inset 0 -1px #a0a0a0;
}
.menu button {
    line-height: 20px;
}

/* toolbar */
.toolbar {
    flex: none;
    height: 30px;
    border-bottom: 2px solid #7c7c7c;
}
.tools {
    width: 943px;
    height: 28px;
    display: flex;
    align-items: center;
    padding: 0 0 0 12px;
    border-right: 1px solid #a0a0a0;
    background: linear-gradient(#a0a0a0, #a0a0a0) 4px 4px / 1px 21px no-repeat;
}
.tools button {
    width: 23px;
    height: 23px;
    flex: none;
    display: flex;
    align-items: center;
    justify-content: center;
}
.tools svg {
    width: 16px;
    height: 16px;
    shape-rendering: crispEdges;
}
.tools .hand {
    shape-rendering: auto;
}
.sep {
    flex: none;
    width: 8px;
    height: 18px;
    background: linear-gradient(#808080, #808080) 3px 0 / 1px 18px no-repeat;
}
.tools .tool-text {
    font: italic bold 14px "Liberation Serif", serif;
}
.tools .tool-op {
    font: bold 11px "Liberation Sans", sans-serif;
}

/* document tabs */
.tabs {
    flex: none;
    height: 27px;
    display: flex;
    align-items: flex-start;
    padding-left: 2px;
    border-left: 1px solid #696969;
    font-size: 11px;
    background: linear-gradient(#868686, #868686) 0 21px / 100% 1px no-repeat, linear-gradient(#868686, #868686) 0 23px / 100% 1px no-repeat, #f0f0f0;
}
.tab {
    display: flex;
    align-items: center;
    gap: 5px;
    height: 20px;
    margin-top: 2px;
    padding: 0 4px;
    border: 1px solid #8c8c8c;
    border-left: none;
    border-bottom: none;
    background: linear-gradient(#f2f2f2, #d2d2d2);
}
.tab.active {
    height: 22px;
    margin-top: 0;
    padding: 0 7px;
    background: #fff;
}
.tab svg {
    width: 16px;
    height: 16px;
}

/* child windows */
.mdi {
    flex: 1;
    min-height: 0;
    display: flex;
    flex-direction: column;
    padding: 0 1px 0 2px;
    background: #ababab;
}
.window {
    flex: 1;
    min-height: 0;
    display: flex;
    flex-direction: column;
    padding: 0 8px 6px 6px;
    border: 1px solid #000;
    border-radius: 6px 6px 0 0;
    box-shadow: inset 1px 1px #fff, inset -1px -1px #38cbe4;
    background: linear-gradient(#97b3d2, #b9d1ea 30px);
}
.window::before, .window::after {
    content: "";
    height: 1px;
    flex: none;
}
.window.inactive {
    border-color: #555;
    box-shadow: inset 1px 1px #fff, inset -1px -1px #f4f7fa;
    background: linear-gradient(#bccada, #d7e4f2 30px);
}
.window-title {
    flex: none;
    height: 28px;
    display: flex;
    align-items: center;
    gap: 4px;
    padding: 5px 1px 0 2px;
    margin-left: 1px;
}
.window-title > svg {
    width: 16px;
    height: 16px;
}
.window-title h2 {
    flex: 1;
}
.inactive h2 {
    color: #4d5560;
}
.window .caption {
    gap: 2px;
}
.window .caption button {
    width: 31px;
    height: 17px;
    border: 1px solid #6b7f9c;
    border-radius: 2px;
    box-shadow: inset 0 0 0 1px #ffffff80;
    background: linear-gradient(#b9cfe6 0, #b2cae3 48%, #93b0d0 50%, #b4cde8 100%);
}
.window .caption .close {
    border-color: #4a1620;
    background: linear-gradient(#e3a79d 0, #d28273 48%, #b33521 50%, #d1685a 100%);
}
.window.inactive .caption button {
    border-color: #8896b2;
    background: #c5d4e4;
}
.client {
    flex: 1;
    min-height: 0;
    display: flex;
    margin-left: 1px;
    border: 2px solid #696969;
    border-top-color: #777;
    border-right-color: #f4f4f4;
    border-bottom-color: #f4f4f4;
    background: #c0c0c0;
}
.inactive .client {
    background: #000;
}
.schematic, .plot {
    flex: 1;
    min-width: 0;
    height: 100%;
}
.wire, .part {
    fill: none;
    stroke: #00f;
    shape-rendering: crispEdges;
}
.part {
    stroke: #000080;
}
.node {
    fill: #00f;
    shape-rendering: crispEdges;
    transform: translate(-.5px, -.5px);
}
.chip {
    fill: #ffffc0;
    stroke: #000080;
}
.labels {
    font: bold 10px "Liberation Sans", sans-serif;
}
.end {
    text-anchor: end;
}
.marks {
    font: 34px "Liberation Sans", sans-serif;
}

/* scroll bar */
.scrollbar {
    width: 16px;
    flex: none;
    display: flex;
    flex-direction: column;
    background: #efefef;
    border-left: 1px solid #fff;
}
.scrollbar button {
    height: 18px;
    display: flex;
    align-items: center;
    justify-content: center;
}
.scrollbar svg {
    width: 8px;
    height: 4px;
    fill: #404040;
}
.thumb {
    flex: 1;
    margin-top: 10px;
    display: flex;
    flex-direction: column;
    align-items: center;
    justify-content: center;
    gap: 1px;
    border: 1px solid #8e8e8e;
    border-radius: 2px;
    background: linear-gradient(90deg, #f6f6f6, #e6e6e9 45%, #c4c4cb 60%, #d8d8dc);
}
.thumb i {
    width: 7px;
    height: 2px;
    border-top: 1px solid #555;
    background: #fff;
}

/* waveform plot */
.plot path {
    fill: none;
    shape-rendering: crispEdges;
}
.plot text {
    font: bold 13px "Liberation Sans", sans-serif;
    fill: #b4b4b4;
}
.axis {
    stroke: #b4b4b4;
}
.n008 {
    stroke: #00a8a8;
}
.n009 {
    stroke: #0f0;
}
.n014 {
    stroke: #00f;
}
.plot .t008 {
    fill: #00a8a8;
}
.plot .t009 {
    fill: #0f0;
}
.plot .t014 {
    fill: #00f;
}
.ylabels {
    text-anchor: end;
}
.xlabels {
    text-anchor: middle;
}
.plot .notes text {
    font: 16px "Liberation Sans", sans-serif;
    fill: #fff;
}

/* status bar */
.status {
    flex: none;
    height: 21px;
    border-top: 2px solid #fff;
    border-bottom: 2px solid #fff;
    box-shadow: inset 0 1px #8c8c8c;
    background: #f0eded;
}

/* task bar */
.taskbar {
    flex: none;
    height: 40px;
    display: flex;
    border-top: 1px solid #0a1c30;
    box-shadow: inset 0 1px #7ea6cb;
    background: linear-gradient(90deg, #1c5488 0, #1f6299 60px, #2d8ac4 115px, #3f9ed3 250px, #48a5d8 420px, #3b93cc 560px, #3484c6 800px, #226fb4 990px, #1c62a9 1180px, #2267b2 1360px, #1a4b80 1400px, #184473 1560px, #16406d 100%);
}
.start {
    width: 58px;
    flex: none;
    padding-left: 8px;
}
.start svg {
    width: 38px;
    height: 38px;
}
.tasks {
    flex: 1;
    display: flex;
    padding-left: 2px;
    background: linear-gradient(45deg, transparent 38%, #a8cdf2 45%, #a8cdf2 53%, transparent 60%) 1147px 0 / 60px 100% no-repeat;
}
.slot {
    width: 62px;
    flex: none;
    padding-right: 4px;
}
.task {
    width: 100%;
    height: 39px;
    display: flex;
    align-items: center;
    justify-content: center;
    border: 1px solid #173f60;
    border-radius: 3px;
    box-shadow: inset 0 0 0 1px #c4e4f8b0;
    background: linear-gradient(160deg, #ffffff90 0, #ffffff38 45%, #ffffff10 60%);
}
.stack {
    background: linear-gradient(90deg, #ffffff30 2px, #174b70 2px 3px, #ffffff40 3px 5px, #174b70 5px 6px, transparent 6px) 51px 1px / 8px 38px no-repeat;
}
.stack .task {
    width: 51px;
}
.task svg {
    width: 32px;
    height: 32px;
}
.task.explorer {
    background: linear-gradient(#f2e77d, #eccd65 50%, #d5813c);
    box-shadow: inset 0 0 0 1px #fff2b0;
}
.task.plain {
    border-color: transparent;
    box-shadow: none;
    background: none;
}
.slot:nth-child(2) {
    background: none;
}
.task.current {
    background: linear-gradient(160deg, #f0f7fc, #a8cbea 60%, #8fbde6);
}
.badge {
    font: bold 8px "DejaVu Sans", sans-serif;
    fill: #fff;
}
.en {
    font: bold 18px "Liberation Sans", sans-serif;
    fill: #e8141c;
    stroke: #fff;
    stroke-width: 1px;
    paint-order: stroke;
}
.tray {
    display: flex;
    align-items: center;
    color: #fff;
}
.tray button {
    width: 24px;
    display: flex;
    justify-content: center;
}
.tray svg {
    width: 16px;
    height: 16px;
}
.lang {
    width: 24px;
    margin-bottom: 6px;
}
.clock {
    width: 74px;
    margin-right: 2px;
    display: flex;
    flex-direction: column;
    text-align: center;
    line-height: 17px;
}
.tray .desktop {
    width: 14px;
    height: 38px;
    border: 1px solid #7d9cbd;
    background: linear-gradient(150deg, #ffffff60, #ffffff10 60%);
}
```
